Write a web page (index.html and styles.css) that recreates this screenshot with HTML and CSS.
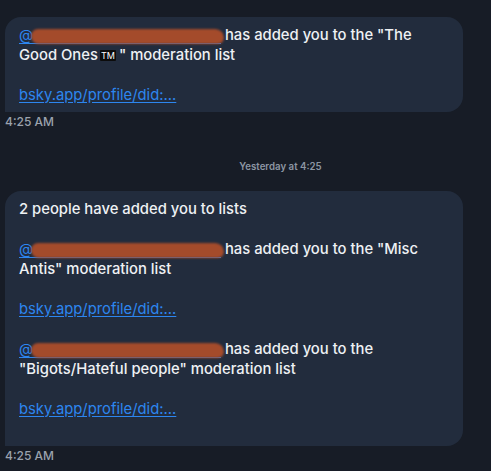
FILE: index.html
```html
<!DOCTYPE html>
<html>
<head>
<meta charset="utf-8">
<link rel="stylesheet" href="styles.css">
</head>
<body>
<div class="chat">
  <div class="msg">
    <div class="bubble">
      <p><a class="mention" href="#">@<span class="scribble"></span></a> has added you to the "The Good Ones<span class="tm">TM</span>" moderation list</p>
      <p class="blank"></p>
      <p><a class="link" href="#">bsky.app/profile/did:...</a></p>
    </div>
    <div class="time">4:25 AM</div>
  </div>

  <div class="sep">Yesterday at 4:25</div>

  <div class="msg">
    <div class="bubble">
      <p>2 people have added you to lists</p>
      <p class="blank"></p>
      <p><a class="mention" href="#">@<span class="scribble"></span></a> has added you to the "Misc Antis" moderation list</p>
      <p class="blank"></p>
      <p><a class="link" href="#">bsky.app/profile/did:...</a></p>
      <p class="blank"></p>
      <p><a class="mention" href="#">@<span class="scribble"></span></a> has added you to the "Bigots/Hateful people" moderation list</p>
      <p class="blank"></p>
      <p><a class="link" href="#">bsky.app/profile/did:...</a></p>
      <p class="blank"></p>
    </div>
    <div class="time">4:25 AM</div>
  </div>
</div>
</body>
</html>
```

FILE: styles.css
```css
html, body {
  margin: 0;
  padding: 0;
  background: #171c26;
}

body {
  font-family: Inter, "Liberation Sans", Arial, sans-serif;
  color: #eef1f4;
  width: 491px;
  height: 471px;
  overflow: hidden;
}

.chat {
  display: flex;
  flex-direction: column;
  padding: 17px 0 0 5px;
}

.msg {
  display: flex;
  flex-direction: column;
  align-items: flex-start;
}

.bubble {
  width: 430px;
  background: #222c3d;
  border-radius: 16px 16px 16px 0;
  padding: 8px 14px 7px 14px;
  font-size: 14.8px;
  line-height: 20px;
  font-weight: 500;
}

.bubble p {
  margin: 0;
  min-height: 20px;
}

.link {
  color: #2d86ef;
  text-decoration: underline;
  text-underline-offset: 2px;
  font-weight: 400;
}

.mention {
  position: relative;
  display: inline-block;
  width: 202px;
  height: 19px;
  box-sizing: border-box;
  border-bottom: 1px solid #2d86ef;
  color: #2d86ef;
  font-weight: 400;
  text-decoration: none;
  vertical-align: top;
}

.scribble {
  position: absolute;
  left: 12px;
  right: -3px;
  top: 4px;
  height: 15px;
  background: #a44b2b;
  border-radius: 8px 10px 7px 9px;
  filter: blur(0.8px);
}

.tm {
  display: inline-block;
  background: #0c0c0c;
  color: #ffffff;
  font-size: 9px;
  line-height: 11px;
  padding: 0 1px;
  margin: 0 3px 0 2px;
  border-radius: 1px;
  vertical-align: 1px;
  font-weight: 400;
}

.time {
  margin-top: 2px;
  font-size: 12px;
  line-height: 16px;
  color: #9ba2ad;
  font-weight: 500;
}

.sep {
  padding: 29px 0 16px 65px;
  text-align: center;
  font-size: 9.7px;
  line-height: 16px;
  font-weight: 600;
  color: #8d96a3;
}
```
